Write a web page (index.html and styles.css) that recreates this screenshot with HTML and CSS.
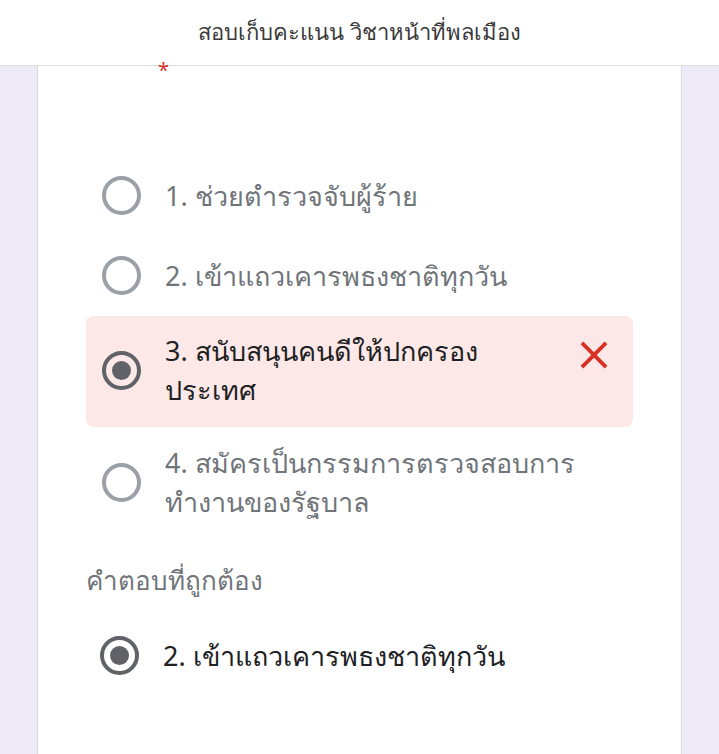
FILE: index.html
```html
<!DOCTYPE html>
<html lang="th">
<head>
    <meta charset="UTF-8">
    <meta name="viewport" content="width=device-width, initial-scale=1.0">
    <title>สอบเก็บคะแนน วิชาหน้าที่พลเมือง</title>
    <link rel="stylesheet" href="styles.css">
</head>
<body>
    <header class="top-bar">
        <h1>สอบเก็บคะแนน วิชาหน้าที่พลเมือง</h1>
    </header>

    <main class="form-card">
        <div class="question-title"><span class="required">*</span></div>

        <div class="options">
            <div class="option">
                <span class="radio"></span>
                <span class="option-text">1. ช่วยตำรวจจับผู้ร้าย</span>
            </div>
            <div class="option">
                <span class="radio"></span>
                <span class="option-text">2. เข้าแถวเคารพธงชาติทุกวัน</span>
            </div>
            <div class="option option-wrong">
                <span class="radio checked"></span>
                <span class="option-text">3. สนับสนุนคนดีให้ปกครองประเทศ</span>
                <svg class="wrong-icon" viewBox="0 0 24 24" width="46" height="46">
                    <path d="M19 6.41L17.59 5 12 10.59 6.41 5 5 6.41 10.59 12 5 17.59 6.41 19 12 13.41 17.59 19 19 17.59 13.41 12z" fill="#d93025"/>
                </svg>
            </div>
            <div class="option">
                <span class="radio"></span>
                <span class="option-text">4. สมัครเป็นกรรมการตรวจสอบการทำงานของรัฐบาล</span>
            </div>
        </div>

        <div class="correct-label">คำตอบที่ถูกต้อง</div>

        <div class="option option-correct">
            <span class="radio checked"></span>
            <span class="option-text">2. เข้าแถวเคารพธงชาติทุกวัน</span>
        </div>
    </main>
</body>
</html>
```

FILE: styles.css
```css
* {
    margin: 0;
    padding: 0;
    box-sizing: border-box;
}

body {
    font-family: 'Noto Sans', 'Liberation Sans', sans-serif;
    background: #efeaf7;
    min-height: 100vh;
}

.top-bar {
    height: 66px;
    background: #ffffff;
    border-bottom: 1px solid #e0e0e0;
    display: flex;
    align-items: center;
    justify-content: center;
}

.top-bar h1 {
    font-size: 22px;
    font-weight: normal;
    color: #3a3a3a;
}

.form-card {
    margin: 0 37px;
    min-height: 688px;
    background: #ffffff;
    border-left: 1px solid #dadce0;
    border-right: 1px solid #dadce0;
    padding: 0 48px 40px 48px;
}

.question-title {
    height: 90px;
    padding-left: 72px;
    line-height: 8px;
}

.required {
    color: #d93025;
    font-size: 20px;
}

.options {
    display: flex;
    flex-direction: column;
    gap: 2px;
}

.option {
    display: flex;
    align-items: center;
    gap: 24px;
    padding: 14px 16px 14px 16px;
    min-height: 78px;
    border-radius: 8px;
}

.radio {
    flex: none;
    width: 39px;
    height: 39px;
    border: 4px solid #9aa0a6;
    border-radius: 50%;
    position: relative;
}

.radio.checked {
    border-color: #5f6368;
}

.radio.checked::after {
    content: "";
    position: absolute;
    top: 6px;
    left: 6px;
    width: 19px;
    height: 19px;
    border-radius: 50%;
    background: #5f6368;
}

.option-text {
    flex: 1;
    font-size: 27px;
    line-height: 39px;
    color: #70757a;
    padding-right: 20px;
}

.option-wrong {
    background: #fce8e6;
    padding: 15px 16px 18px 16px;
}

.option-wrong .option-text {
    color: #202124;
}

.wrong-icon {
    flex: none;
    align-self: flex-start;
    margin: 1px 0 0 0;
}

.correct-label {
    margin-top: 25px;
    font-size: 26px;
    color: #70757a;
}

.option-correct {
    margin-top: 15px;
    padding-left: 14px;
}

.option-correct .option-text {
    color: #202124;
}
```
